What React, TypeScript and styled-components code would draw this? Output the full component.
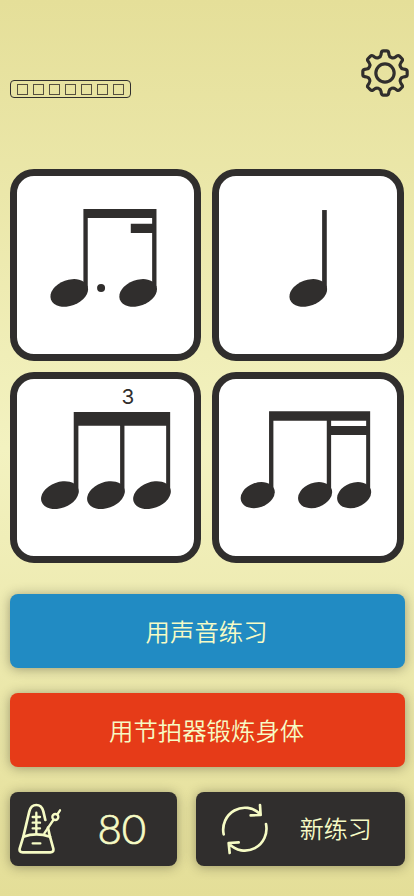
import React from "react";
import styled, { createGlobalStyle } from "styled-components";

const INK = "#302e2d";
const CREAM = "#f6fbc5";

const GlobalStyle = createGlobalStyle`
  * { box-sizing: border-box; }
  html, body { margin: 0; padding: 0; }
  body { background: #e6e09c; overflow: hidden; }
`;

const Screen = styled.main`
  width: 414px;
  height: 896px;
  padding: 49px 9.3px 0 9.5px;
  display: flex;
  flex-direction: column;
  background: linear-gradient(180deg, #e5df99 0%, #f3f2c0 50%, #e4de98 100%);
  font-family: "Noto Sans CJK SC", sans-serif;
`;

const Header = styled.header`
  height: 120.3px;
  display: flex;
  justify-content: space-between;
  align-items: flex-start;
`;

const LevelButton = styled.button`
  display: flex;
  align-items: center;
  justify-content: center;
  gap: 5px;
  width: 120.6px;
  height: 18px;
  margin: 31px 0 0 0.7px;
  padding: 0;
  background: transparent;
  border: 1px solid ${INK};
  border-radius: 4px;
`;

const Step = styled.span`
  width: 11px;
  height: 11px;
  border: 1px solid #554f3f;
`;

const IconButton = styled.button`
  width: 48px;
  height: 48px;
  margin-right: -4px;
  padding: 0;
  border: 0;
  background: transparent;
`;

const Icon = styled.svg<{ $w: number; $h: number }>`
  display: block;
  flex: none;
  width: ${(p) => p.$w}px;
  height: ${(p) => p.$h}px;
  fill: none;
  stroke-linecap: round;
  stroke-linejoin: round;
`;

const Cards = styled.section`
  display: grid;
  grid-template-columns: 191.4px 191.4px;
  gap: 11px;
  padding-left: 0.6px;
`;

const Card = styled.div`
  height: 191.4px;
  border: 7px solid ${INK};
  border-radius: 24px;
  background: #fff;
`;

const Score = styled.svg`
  display: block;
  width: 177.2px;
  height: 177.2px;
  fill: ${INK};
  font-family: Inter, sans-serif;
  font-size: 62px;
  font-weight: 400;
`;

const Actions = styled.section`
  display: flex;
  flex-direction: column;
  gap: 25px;
  margin-top: 31.4px;
`;

const ActionButton = styled.button<{ $bg: string; $grow?: string }>`
  display: flex;
  align-items: center;
  justify-content: center;
  flex: ${(p) => p.$grow ?? "none"};
  height: 73.8px;
  padding: 0;
  border: 0;
  border-radius: 8px;
  background: ${(p) => p.$bg};
  color: ${CREAM};
  font-family: inherit;
  font-size: 24.4px;
  font-weight: 350;
  line-height: 36px;
  box-shadow: 0 1px 12px rgba(48, 46, 30, 0.42);
`;

const Label = styled.span`
  padding-bottom: 1px;
  padding-right: 1px;
`;

const BottomRow = styled.div`
  display: flex;
  gap: 18.6px;
`;

const Tempo = styled.span`
  margin-left: 35px;
  margin-right: 22px;
  padding-bottom: 1px;
  font-family: Lato, sans-serif;
  font-size: 42px;
  font-weight: 300;
  -webkit-text-stroke: 0.7px ${CREAM};
`;

const NewLabel = styled.span`
  margin-left: 31px;
  margin-right: 8px;
  padding-bottom: 2px;
  font-size: 24px;
`;

const rotate = (x: number, y: number, deg: number) => {
  const a = (deg * Math.PI) / 180;
  return `${(x * Math.cos(a) - y * Math.sin(a)).toFixed(1)},${(x * Math.sin(a) + y * Math.cos(a)).toFixed(1)}`;
};

const gearPath =
  Array.from({ length: 8 }, (_, i) => {
    const p = (x: number, y: number) => rotate(x, y, i * 45);
    return `${i ? "L" : "M"}${p(-19.1, -46.2)} Q${p(-13, -48.5)} ${p(-12, -55)} L${p(-11, -61)} Q${p(-10, -66.5)} ${p(-5, -66.5)} L${p(5, -66.5)} Q${p(10, -66.5)} ${p(11, -61)} L${p(12, -55)} Q${p(13, -48.5)} ${p(19.1, -46.2)}`;
  }).join(" ") + "Z";

const Gear = () => (
  <Icon $w={48} $h={48} viewBox="-72 -72 144 144" stroke={INK} strokeWidth={9.5}>
    <path d={gearPath} />
    <circle r={27.5} />
  </Icon>
);

const Metronome = () => (
  <Icon $w={44} $h={52} viewBox="54 69 132 156" stroke={CREAM} strokeWidth={8}>
    <path d="M136 120 L130 94 Q125 75 109 75 Q93 75 88 94 L70 170 L59 206 Q57 217 68 217 H151 Q162 217 160 206 L150 170 L144 143" />
    <path d="M70 170 Q109 156 150 170" />
    <path d="M109 98 V160 M98 111 H120 M98 128 H120 M98 145 H120" strokeWidth={7} />
    <path d="M98 190 H121 M133 160 L160 120 M172 103 L180 91" strokeWidth={7} />
    <circle cx={166} cy={111} r={9} strokeWidth={7} />
  </Icon>
);

const Refresh = () => (
  <Icon $w={48} $h={52} viewBox="102 68 144 156" stroke={CREAM} strokeWidth={8}>
    <path d="M110 162 A65 66 0 0 1 219 101 M219 74 L221 104 L191 105" />
    <path d="M237 131 A65 66 0 0 1 126 190 M128 218 L125 188 L155 186" />
  </Icon>
);

const Head = ({ x, y = 347.5, small }: { x: number; y?: number; small?: boolean }) => (
  <ellipse rx={small ? 52.6 : 58.4} ry={small ? 36.8 : 38.7} transform={`translate(${x} ${y}) rotate(-20)`} />
);

export default function App() {
  return (
    <>
      <GlobalStyle />
      <Screen>
        <Header>
          <LevelButton>
            {Array.from({ length: 7 }, (_, i) => (
              <Step key={i} />
            ))}
          </LevelButton>
          <IconButton>
            <Gear />
          </IconButton>
        </Header>
        <Cards>
          <Card>
            <Score viewBox="-1 -3 531 531">
              <path d="M198 96H417V339H404V168H340V140H404V123H211V339H198Z" />
              <Head x={155.5} />
              <Head x={362} />
              <circle cx={251} cy={333} r={12} />
            </Score>
          </Card>
          <Card>
            <Score viewBox="-2 -3 531 531">
              <path d="M307 99H321V340H307Z" />
              <Head x={265.5} />
            </Score>
          </Card>
          <Card>
            <Score viewBox="-1 -1 531 531">
              <text x={331} y={73} textAnchor="middle">3</text>
              <path d="M169 98H458V339H446V139H321V339H308V139H183V339H169Z" />
              <Head x={127.5} y={347} />
              <Head x={265.5} y={347} />
              <Head x={403.5} y={347} />
            </Score>
          </Card>
          <Card>
            <Score viewBox="-2 -1 531 531">
              <path d="M148 96H451V340H439V167H334V340H321V124H161V340H148Z" />
              <path d="M334 124H439V140H334Z" fill="#fff" />
              <Head x={114} y={347} small />
              <Head x={286} y={347} small />
              <Head x={403} y={347} small />
            </Score>
          </Card>
        </Cards>
        <Actions>
          <ActionButton $bg="#218bc3">
            <Label>用声音练习</Label>
          </ActionButton>
          <ActionButton $bg="#e63b18">
            <Label>用节拍器锻炼身体</Label>
          </ActionButton>
          <BottomRow>
            <ActionButton $bg={INK} $grow="0 0 167.6px">
              <Metronome />
              <Tempo>80</Tempo>
            </ActionButton>
            <ActionButton $bg={INK} $grow="1">
              <Refresh />
              <NewLabel>新练习</NewLabel>
            </ActionButton>
          </BottomRow>
        </Actions>
      </Screen>
    </>
  );
}
